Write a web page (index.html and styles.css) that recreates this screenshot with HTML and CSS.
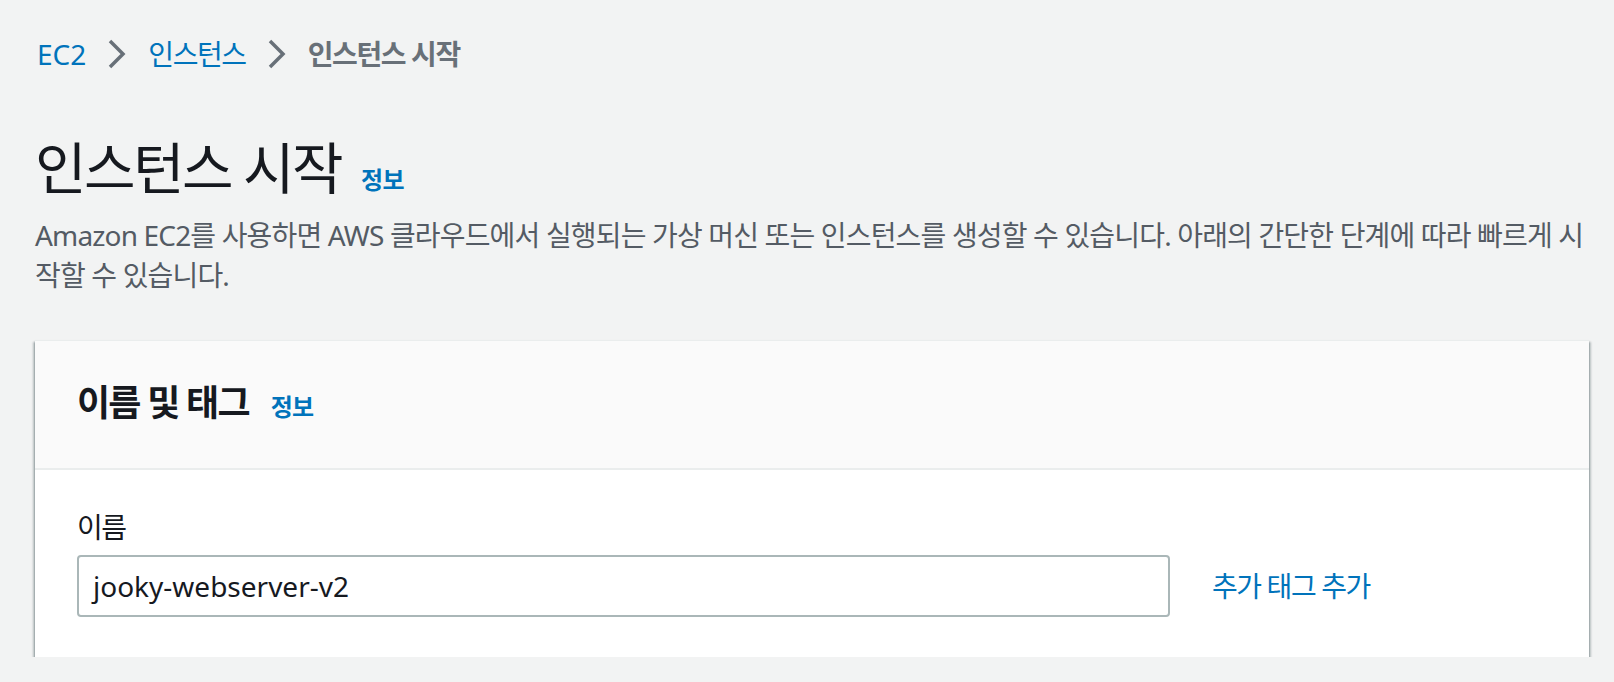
FILE: index.html
```html
<!DOCTYPE html>
<html lang="ko">
<head>
<meta charset="utf-8">
<link rel="stylesheet" href="styles.css">
</head>
<body>
<div class="page">
  <nav class="breadcrumbs">
    <a class="crumb link">EC2</a>
    <svg class="chev" width="18" height="30" viewBox="0 0 18 30"><path d="M2 2 L15 15 L2 28" fill="none" stroke="#687078" stroke-width="3.5"/></svg>
    <a class="crumb link ko">인스턴스</a>
    <svg class="chev" width="18" height="30" viewBox="0 0 18 30"><path d="M2 2 L15 15 L2 28" fill="none" stroke="#687078" stroke-width="3.5"/></svg>
    <span class="crumb current ko">인스턴스 시작</span>
  </nav>

  <div class="title-row">
    <h1 class="title">인스턴스 시작</h1>
    <a class="info">정보</a>
  </div>
  <p class="desc">Amazon EC2를 사용하면 AWS 클라우드에서 실행되는 가상 머신 또는 인스턴스를 생성할 수 있습니다. 아래의 간단한 단계에 따라 빠르게 시작할 수 있습니다.</p>

  <section class="card">
    <header class="card-header">
      <h2 class="card-title">이름 및 태그</h2>
      <a class="info">정보</a>
    </header>
    <div class="card-body">
      <label class="label">이름</label>
      <div class="field-row">
        <div class="input">jooky-webserver-v2</div>
        <a class="add-link">추가 태그 추가</a>
      </div>
    </div>
  </section>
</div>
</body>
</html>
```
FILE: styles.css
```css
html, body {
  margin: 0;
  padding: 0;
  background: #f2f3f3;
}
body {
  font-family: "Noto Sans", "Noto Sans CJK KR", sans-serif;
  color: #16191f;
}
.page {
  padding: 34px 25px 0 35px;
}
.breadcrumbs {
  display: flex;
  align-items: center;
  height: 40px;
  gap: 22px;
  padding-left: 2px;
}
.crumb {
  font-size: 28px;
  line-height: 40px;
}
.ko {
  letter-spacing: -0.05em;
}
.link {
  color: #0073bb;
}
.current {
  color: #687078;
  font-weight: 700;
}
.chev {
  display: block;
}
.title-row {
  display: flex;
  align-items: baseline;
  gap: 20px;
  margin-top: 57px;
}
.title {
  margin: 0;
  font-size: 56px;
  line-height: 72px;
  font-weight: 400;
  letter-spacing: -0.045em;
  color: #16191f;
}
.info {
  color: #0073bb;
  font-weight: 700;
  font-size: 24px;
  letter-spacing: -0.03em;
}
.desc {
  margin: 12px 0 0 0;
  font-size: 28px;
  line-height: 40px;
  letter-spacing: -0.03em;
  color: #545b64;
}
.card {
  margin-top: 45px;
  background: #ffffff;
  box-shadow: 0 2px 2px 0 rgba(0, 28, 36, 0.5), 2px 2px 2px 0 rgba(0, 28, 36, 0.2), -2px 2px 2px 0 rgba(0, 28, 36, 0.2);
  border-top: 1px solid #eaeded;
}
.card-header {
  display: flex;
  align-items: baseline;
  gap: 22px;
  background: #fafafa;
  padding: 34px 42px 37px 42px;
  border-bottom: 2px solid #eaeded;
  height: 56px;
  box-sizing: content-box;
}
.card-title {
  margin: 0;
  font-size: 36px;
  line-height: 56px;
  font-weight: 700;
  letter-spacing: -0.05em;
}
.card-body {
  padding: 37px 42px 40px 42px;
}
.label {
  display: block;
  font-size: 28px;
  line-height: 40px;
  letter-spacing: -0.05em;
  color: #16191f;
}
.field-row {
  display: flex;
  align-items: center;
  gap: 42px;
  margin-top: 8px;
}
.input {
  width: 1093px;
  height: 62px;
  box-sizing: border-box;
  border: 2px solid #aab7b8;
  border-radius: 4px;
  padding: 0 14px;
  font-size: 28px;
  line-height: 58px;
  color: #16191f;
}
.add-link {
  color: #0073bb;
  font-size: 28px;
  line-height: 40px;
  letter-spacing: -0.05em;
}
```
